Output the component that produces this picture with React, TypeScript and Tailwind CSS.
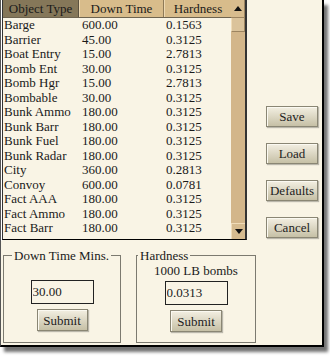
const rows: [string, string, string][] = [
  ["Barge", "600.00", "0.1563"],
  ["Barrier", "45.00", "0.3125"],
  ["Boat Entry", "15.00", "2.7813"],
  ["Bomb Ent", "30.00", "0.3125"],
  ["Bomb Hgr", "15.00", "2.7813"],
  ["Bombable", "30.00", "0.3125"],
  ["Bunk Ammo", "180.00", "0.3125"],
  ["Bunk Barr", "180.00", "0.3125"],
  ["Bunk Fuel", "180.00", "0.3125"],
  ["Bunk Radar", "180.00", "0.3125"],
  ["City", "360.00", "0.2813"],
  ["Convoy", "600.00", "0.0781"],
  ["Fact AAA", "180.00", "0.3125"],
  ["Fact Ammo", "180.00", "0.3125"],
  ["Fact Barr", "180.00", "0.3125"],
];

function Btn({ label, className = "" }: { label: string; className?: string }) {
  return (
    <button
      className={`flex h-[21px] items-center justify-center border border-[#8a8674] bg-gradient-to-b from-[#f3efe2] to-[#c6c0a6] text-[13px] leading-none text-[#1d1d1d] shadow-[inset_1px_1px_0_#fbf9f1,1px_1px_1px_rgba(0,0,0,0.25)] ${className}`}
    >
      {label}
    </button>
  );
}

function Arrow({ up }: { up?: boolean }) {
  return (
    <svg width="8" height="5" viewBox="0 0 8 5">
      {up ? <path d="M0 5 L4 0 L8 5 Z" fill="#111" /> : <path d="M0 0 L8 0 L4 5 Z" fill="#111" />}
    </svg>
  );
}

export default function App() {
  return (
    <div className="h-[356px] w-[330px] bg-white [font-family:'Liberation_Serif',serif] text-[#1a1a1a]">
      <div className="flex h-[347px] w-[324px] flex-col border-b-2 border-l border-r-2 border-b-black border-l-[#555] border-r-black bg-[#f9f4e5] shadow-[4px_5px_3px_rgba(0,0,0,0.55)]">
        <div className="flex h-[241px] border-l border-l-white">
          {/* list */}
          <div className="flex h-[240px] w-[245px] border-b border-l border-r-2 border-b-black border-l-[#333] border-r-[#333]">
            <div className="flex w-[229px] flex-col">
              <div className="flex h-[18px] border-b border-[#6e6450] text-[13px] leading-[17px]">
                <div className="w-[76px] border-r border-r-[#5c5240] bg-[#857759] text-center">Object Type</div>
                <div className="w-[85px] border-l border-r border-l-[#eed9b2] border-r-[#8e7a58] bg-[#d8bc8b] text-center">Down Time</div>
                <div className="flex-1 border-l border-l-[#eed9b2] bg-[#d8bc8b] text-center">Hardness</div>
              </div>
              {rows.map(([a, b, c]) => (
                <div key={a} className="flex h-[14.5px] text-[13px] leading-[14.5px]">
                  <div className="w-[76px] pl-[1px]">{a}</div>
                  <div className="w-[85px] pl-[3px]">{b}</div>
                  <div className="flex-1 pl-[2px]">{c}</div>
                </div>
              ))}
            </div>
            {/* scrollbar */}
            <div className="flex w-[14px] flex-col bg-[#d3b68a]">
              <div className="flex h-[18px] items-center justify-center border-b border-r border-[#9c8460] bg-[#d8bc8e]">
                <Arrow up />
              </div>
              <div className="h-[14px] border-b border-l border-r border-b-[#9c8460] border-l-[#f0dcb8] border-r-[#9c8460] bg-[#dbc39b]" />
              <div className="flex-1" />
              <div className="flex h-[16px] items-center justify-center border-t border-l border-t-[#f0dcb8] border-l-[#f0dcb8] bg-[#d6bb8f]">
                <Arrow />
              </div>
            </div>
          </div>
          {/* buttons */}
          <div className="ml-[19px] flex w-[52px] flex-col gap-[16px] pt-[106px]">
            <Btn label="Save" />
            <Btn label="Load" />
            <Btn label="Defaults" />
            <Btn label="Cancel" />
          </div>
        </div>
        <div className="mt-[7px] flex">
          <fieldset className="ml-[2px] h-[95px] w-[118px] border border-[#7c7a70]">
            <legend className="ml-[8px] px-[2px] text-[13px] leading-[15px]">Down Time Mins.</legend>
            <div className="flex flex-col items-center">
              <input
                defaultValue="30.00"
                className="mt-[17px] h-[24px] w-[63px] border border-[#222] bg-transparent pl-[1px] text-[13px] outline-none"
              />
              <Btn label="Submit" className="mt-[5px] h-[22px] w-[51px]" />
            </div>
          </fieldset>
          <fieldset className="ml-[15px] h-[95px] w-[120px] border border-[#7c7a70]">
            <legend className="ml-[1px] px-[2px] text-[13px] leading-[15px]">Hardness</legend>
            <div className="flex flex-col items-center">
              <div className="text-[13px] leading-[15px]">1000 LB bombs</div>
              <input
                defaultValue="0.0313"
                className="mt-[3px] h-[24px] w-[63px] border border-[#222] bg-transparent pl-[1px] text-[13px] outline-none"
              />
              <Btn label="Submit" className="mt-[5px] h-[22px] w-[52px]" />
            </div>
          </fieldset>
        </div>
      </div>
    </div>
  );
}
